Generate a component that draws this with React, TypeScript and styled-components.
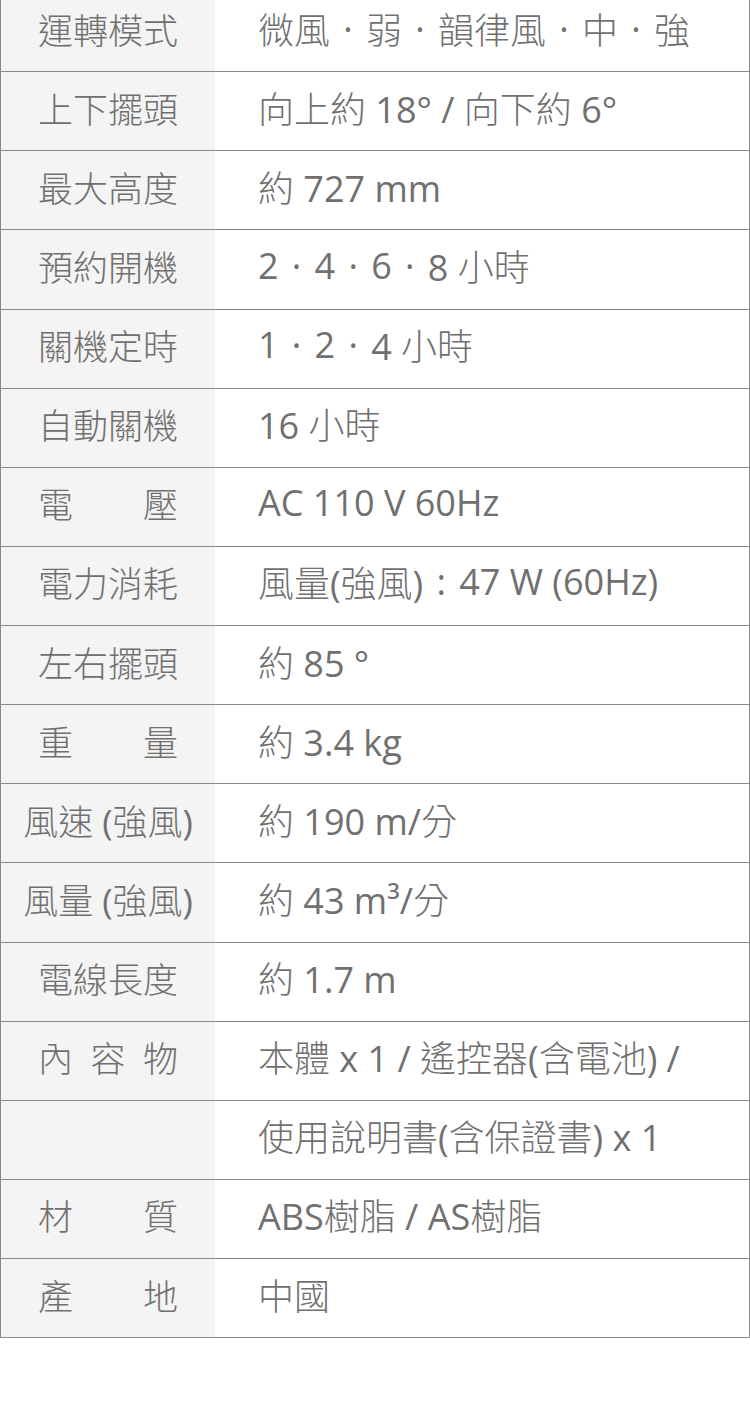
import React from "react";
import styled, { createGlobalStyle } from "styled-components";

const Global = createGlobalStyle`
  html, body { margin: 0; padding: 0; background: #fff; }
  body { font-family: "Open Sans", "Noto Sans CJK TC", sans-serif; }
`;

const Page = styled.div`
  width: 750px;
  height: 1402px;
  overflow: hidden;
  background: #fff;
`;

const Table = styled.div`
  margin-top: -7px;
  width: 750px;
  box-sizing: border-box;
  border-left: 1px solid #8a8a8a;
  border-right: 1px solid #8a8a8a;
  display: grid;
  grid-auto-rows: 79.125px;
`;

const Row = styled.div`
  display: grid;
  grid-template-columns: 214px 1fr;
  box-sizing: border-box;
  border-bottom: 1px solid #8a8a8a;
`;

const Label = styled.div`
  background: #f4f4f4;
  display: flex;
  align-items: center;
  justify-content: center;
  color: #707070;
  font-family: "Open Sans", "Noto Sans CJK TC Light", "Noto Sans CJK TC", sans-serif;
  font-size: 35px;
  font-weight: 400;
  white-space: nowrap;
  padding-bottom: 8px;
`;

const LabelText = styled.span<{ $justify?: boolean }>`
  display: inline-block;
  width: ${(p) => (p.$justify ? "140px" : "auto")};
  text-align: ${(p) => (p.$justify ? "justify" : "center")};
  text-align-last: ${(p) => (p.$justify ? "justify" : "center")};
`;

const Value = styled.div`
  display: flex;
  align-items: center;
  padding-left: 43px;
  padding-bottom: 8px;
  color: #707070;
  font-family: "Open Sans", "Noto Sans CJK TC Light", "Noto Sans CJK TC", sans-serif;
  font-size: 36px;
  font-weight: 400;
  white-space: pre;
`;

const Sep = styled.span`
  display: inline-block;
  width: 1em;
  text-align: center;
  font-family: "Open Sans", sans-serif;
  font-weight: 400;
`;

type Spec = { label: string; value: string; justify?: boolean };

const specs: Spec[] = [
  { label: "運轉模式", value: "微風・弱・韻律風・中・強" },
  { label: "上下擺頭", value: "向上約 18° / 向下約 6°" },
  { label: "最大高度", value: "約 727 mm" },
  { label: "預約開機", value: "2・4・6・8 小時" },
  { label: "關機定時", value: "1・2・4 小時" },
  { label: "自動關機", value: "16 小時" },
  { label: "電 壓", value: "AC 110 V 60Hz", justify: true },
  { label: "電力消耗", value: "風量(強風)：47 W (60Hz)" },
  { label: "左右擺頭", value: "約 85 °" },
  { label: "重 量", value: "約 3.4 kg", justify: true },
  { label: "風速 (強風)", value: "約 190 m/分" },
  { label: "風量 (強風)", value: "約 43 m³/分" },
  { label: "電線長度", value: "約 1.7 m" },
  { label: "內 容 物", value: "本體 x 1 / 遙控器(含電池) /", justify: true },
  { label: "", value: "使用說明書(含保證書) x 1" },
  { label: "材 質", value: "ABS樹脂 / AS樹脂", justify: true },
  { label: "產 地", value: "中國", justify: true },
];

function renderValue(v: string) {
  const parts = v.split(/([・：])/);
  return parts.map((p, i) => {
    if (p === "・") return <Sep key={i}>·</Sep>;
    if (p === "：") return <Sep key={i}>:</Sep>;
    return <React.Fragment key={i}>{p}</React.Fragment>;
  });
}

export default function App() {
  return (
    <Page>
      <Global />
      <Table>
        {specs.map((s, i) => (
          <Row key={i}>
            <Label>
              <LabelText $justify={s.justify}>{s.label}</LabelText>
            </Label>
            <Value>{renderValue(s.value)}</Value>
          </Row>
        ))}
      </Table>
    </Page>
  );
}
